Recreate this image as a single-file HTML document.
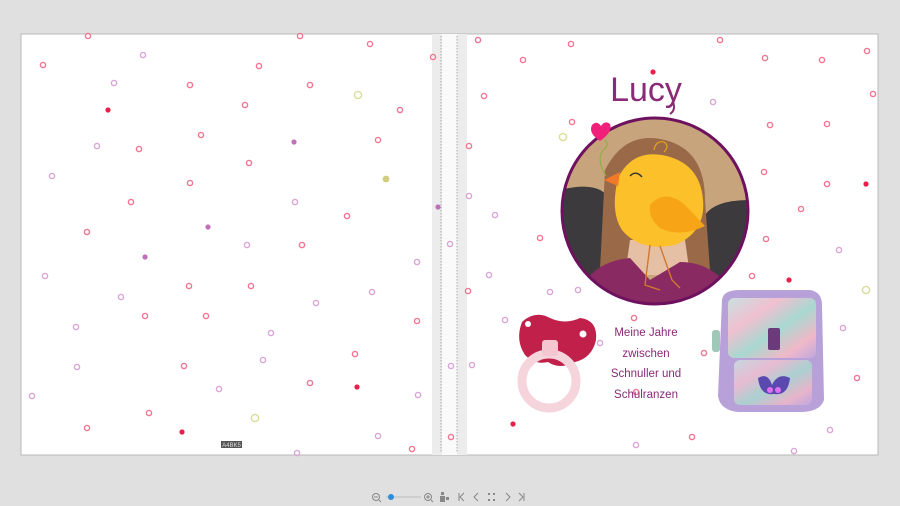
<!DOCTYPE html>
<html><head><meta charset="utf-8"><style>
html,body{margin:0;padding:0;background:#e0e0e0;width:900px;height:506px;overflow:hidden;font-family:"Liberation Sans",sans-serif}
</style></head><body>
<svg width="900" height="506" viewBox="0 0 900 506" xmlns="http://www.w3.org/2000/svg" style="position:absolute;left:0;top:0">
<defs>
<clipPath id="cc"><circle cx="655" cy="211" r="93"/></clipPath>
<linearGradient id="bp" x1="0" y1="0" x2="1" y2="1">
<stop offset="0" stop-color="#c8e0e0"/><stop offset="0.3" stop-color="#f0c0d0"/><stop offset="0.55" stop-color="#a8d8d0"/><stop offset="0.8" stop-color="#f0b8c8"/><stop offset="1" stop-color="#c0a8e0"/>
</linearGradient>
</defs>
<!-- pages -->
<rect x="21" y="34" width="857" height="421" fill="#fff" stroke="#b8b8b8" stroke-width="1"/>
<rect x="432" y="34" width="10" height="421" fill="#ececec"/>
<rect x="457" y="34" width="10" height="421" fill="#ececec"/>
<rect x="442" y="34" width="15" height="421" fill="#fafafa"/>
<line x1="441" y1="36" x2="441" y2="453" stroke="#999" stroke-dasharray="1.5,1.5" stroke-width="0.8"/>
<line x1="457" y1="36" x2="457" y2="453" stroke="#999" stroke-dasharray="1.5,1.5" stroke-width="0.8"/>
<g fill="none" stroke-width="1.4">
<g stroke="#f07894">
<circle cx="88" cy="36" r="2.6"/><circle cx="43" cy="65" r="2.6"/><circle cx="259" cy="66" r="2.6"/><circle cx="300" cy="36" r="2.6"/><circle cx="370" cy="44" r="2.6"/><circle cx="190" cy="85" r="2.6"/><circle cx="310" cy="85" r="2.6"/><circle cx="245" cy="105" r="2.6"/><circle cx="400" cy="110" r="2.6"/><circle cx="201" cy="135" r="2.6"/><circle cx="139" cy="149" r="2.6"/><circle cx="378" cy="140" r="2.6"/><circle cx="249" cy="163" r="2.6"/><circle cx="190" cy="183" r="2.6"/><circle cx="131" cy="202" r="2.6"/><circle cx="347" cy="216" r="2.6"/><circle cx="87" cy="232" r="2.6"/><circle cx="302" cy="245" r="2.6"/><circle cx="189" cy="286" r="2.6"/><circle cx="251" cy="286" r="2.6"/><circle cx="145" cy="316" r="2.6"/><circle cx="206" cy="316" r="2.6"/><circle cx="417" cy="321" r="2.6"/><circle cx="184" cy="366" r="2.6"/><circle cx="355" cy="354" r="2.6"/><circle cx="310" cy="383" r="2.6"/><circle cx="149" cy="413" r="2.6"/><circle cx="87" cy="428" r="2.6"/><circle cx="412" cy="449" r="2.6"/><circle cx="433" cy="57" r="2.6"/><circle cx="451" cy="437" r="2.6"/><circle cx="469" cy="146" r="2.6"/><circle cx="468" cy="291" r="2.6"/>
<circle cx="478" cy="40" r="2.6"/><circle cx="523" cy="60" r="2.6"/><circle cx="571" cy="44" r="2.6"/><circle cx="720" cy="40" r="2.6"/><circle cx="765" cy="58" r="2.6"/><circle cx="822" cy="60" r="2.6"/><circle cx="867" cy="51" r="2.6"/><circle cx="484" cy="96" r="2.6"/><circle cx="572" cy="122" r="2.6"/><circle cx="770" cy="125" r="2.6"/><circle cx="827" cy="124" r="2.6"/><circle cx="873" cy="94" r="2.6"/><circle cx="764" cy="172" r="2.6"/><circle cx="827" cy="184" r="2.6"/><circle cx="801" cy="209" r="2.6"/><circle cx="540" cy="238" r="2.6"/><circle cx="766" cy="239" r="2.6"/><circle cx="752" cy="276" r="2.6"/><circle cx="857" cy="378" r="2.6"/><circle cx="692" cy="437" r="2.6"/><circle cx="636" cy="392" r="2.6"/><circle cx="634" cy="318" r="2.6"/><circle cx="704" cy="353" r="2.6"/>
</g>
<g stroke="#dba6d6">
<circle cx="143" cy="55" r="2.6"/><circle cx="114" cy="83" r="2.6"/><circle cx="97" cy="146" r="2.6"/><circle cx="52" cy="176" r="2.6"/><circle cx="295" cy="202" r="2.6"/><circle cx="247" cy="245" r="2.6"/><circle cx="417" cy="262" r="2.6"/><circle cx="45" cy="276" r="2.6"/><circle cx="372" cy="292" r="2.6"/><circle cx="121" cy="297" r="2.6"/><circle cx="316" cy="303" r="2.6"/><circle cx="76" cy="327" r="2.6"/><circle cx="271" cy="333" r="2.6"/><circle cx="77" cy="367" r="2.6"/><circle cx="263" cy="360" r="2.6"/><circle cx="32" cy="396" r="2.6"/><circle cx="219" cy="389" r="2.6"/><circle cx="418" cy="395" r="2.6"/><circle cx="378" cy="436" r="2.6"/><circle cx="297" cy="453" r="2.6"/><circle cx="450" cy="244" r="2.6"/><circle cx="451" cy="366" r="2.6"/><circle cx="469" cy="196" r="2.6"/><circle cx="472" cy="365" r="2.6"/>
<circle cx="713" cy="102" r="2.6"/><circle cx="495" cy="215" r="2.6"/><circle cx="839" cy="250" r="2.6"/><circle cx="489" cy="275" r="2.6"/><circle cx="578" cy="290" r="2.6"/><circle cx="550" cy="292" r="2.6"/><circle cx="843" cy="328" r="2.6"/><circle cx="505" cy="320" r="2.6"/><circle cx="600" cy="343" r="2.6"/><circle cx="636" cy="445" r="2.6"/><circle cx="830" cy="430" r="2.6"/><circle cx="794" cy="451" r="2.6"/>
</g>
<g stroke="#dcdc9a"><circle cx="358" cy="95" r="3.6"/><circle cx="255" cy="418" r="3.6"/><circle cx="563" cy="137" r="3.6"/><circle cx="866" cy="290" r="3.6"/></g>
</g>
<g fill="#e8204a"><circle cx="108" cy="110" r="2.6"/><circle cx="357" cy="387" r="2.6"/><circle cx="182" cy="432" r="2.6"/><circle cx="653" cy="72" r="2.6"/><circle cx="866" cy="184" r="2.6"/><circle cx="789" cy="280" r="2.6"/><circle cx="513" cy="424" r="2.6"/></g>
<g fill="#c070b8"><circle cx="294" cy="142" r="2.6"/><circle cx="208" cy="227" r="2.6"/><circle cx="145" cy="257" r="2.6"/><circle cx="438" cy="207" r="2.6"/></g>
<circle cx="386" cy="179" r="3.4" fill="#d0cc80"/>
<rect x="221" y="441" width="21" height="7" fill="#555"/>
<text x="231.5" y="447" font-size="6" fill="#ddd" text-anchor="middle">A4BK5</text>

<!-- photo -->
<g clip-path="url(#cc)">
<rect x="560" y="116" width="190" height="190" fill="#c7a47c"/>
<path d="M560 190 Q600 180 610 200 L612 306 L560 306Z" fill="#3c3a3c"/>
<path d="M750 200 Q715 200 705 215 L705 306 L750 306Z" fill="#3c3a3c"/>
<path d="M605 170 Q625 130 665 140 Q705 150 705 200 L710 270 L600 270 Z" fill="#9a6a48"/>
<path d="M630 240 L685 240 L690 275 L625 275Z" fill="#e6c0a4"/>
<path d="M575 306 Q585 262 630 258 L650 280 L680 262 Q720 262 740 306Z" fill="#8a2a62"/>
</g>
<circle cx="655" cy="211" r="93" fill="none" stroke="#6e1260" stroke-width="3"/>
<!-- chick -->
<path d="M618 178 Q632 150 662 155 Q700 162 703 200 Q706 232 675 245 Q640 252 622 230 Q610 212 618 178Z" fill="#fbc02a"/>
<path d="M650 205 Q665 188 685 205 L705 226 Q680 238 660 228 Q648 218 650 205Z" fill="#f7a417"/>
<path d="M620 172 L604 180 L618 186Z" fill="#f07a28"/>
<path d="M630 176 Q636 170 642 177" stroke="#333" stroke-width="1.4" fill="none"/>
<path d="M650 245 L645 285 L660 290 M660 246 L672 280 L680 288" stroke="#d07830" stroke-width="1.4" fill="none"/>
<path d="M654 150 Q656 140 664 142 Q670 146 664 152" stroke="#e8a020" stroke-width="1.2" fill="none"/>
<path d="M606 176 Q596 160 603 150 M603 150 Q610 145 605 140" stroke="#8ab040" stroke-width="1" fill="none"/>
<path d="M600 141 Q588 133 592 125 Q597 120 601 126 Q605 120 610 124 Q613 132 600 141Z" fill="#f0207a"/>
<!-- Lucy -->
<text x="646" y="101" font-size="34" fill="#8a2a78" text-anchor="middle" font-family="'Liberation Sans',sans-serif" font-weight="300">Lucy</text>
<path d="M673 102 Q676 110 670 114" stroke="#8a2a78" stroke-width="2" fill="none"/>
<g font-size="11.5" fill="#8a2a78" text-anchor="middle">
<text x="646" y="336">Meine Jahre</text>
<text x="646" y="357">zwischen</text>
<text x="646" y="377">Schnuller und</text>
<text x="646" y="398">Schulranzen</text>
</g>
<!-- pacifier -->
<path d="M522 322 Q535 310 550 318 Q565 325 580 318 Q598 320 596 340 Q592 358 575 362 Q560 370 548 362 Q535 365 525 355 Q515 340 522 322Z" fill="#c0204a"/>
<circle cx="528" cy="324" r="3" fill="#fff"/><circle cx="583" cy="334" r="3.5" fill="#fff"/>
<circle cx="549" cy="381" r="27" fill="none" stroke="#f6d4dc" stroke-width="9"/>
<rect x="542" y="340" width="16" height="16" rx="3" fill="#f3c6d0"/>
<!-- backpack -->
<path d="M722 300 Q723 290 740 290 L810 290 Q822 292 822 305 L824 400 Q820 412 800 412 L738 412 Q720 410 718 396Z" fill="#b8a0d8"/>
<rect x="728" y="298" width="88" height="60" rx="6" fill="url(#bp)"/>
<rect x="734" y="360" width="78" height="45" rx="6" fill="url(#bp)" opacity="0.85"/>
<rect x="768" y="328" width="12" height="22" rx="2" fill="#6a3a7a"/>
<path d="M758 378 Q768 372 772 385 Q778 372 790 378 Q788 396 774 394 Q760 396 758 378Z" fill="#5a4ab0"/>
<circle cx="770" cy="390" r="3" fill="#e070f0"/><circle cx="778" cy="390" r="3" fill="#e070f0"/>
<rect x="712" y="330" width="8" height="22" rx="3" fill="#a0c8b8"/>
<!-- toolbar -->
<g stroke="#888" fill="none" stroke-width="1">
<circle cx="376" cy="497" r="3.5"/><line x1="374" y1="497" x2="378" y2="497"/><line x1="379" y1="500" x2="381" y2="502"/>
<line x1="386" y1="497" x2="421" y2="497" stroke="#bbb"/>
<circle cx="428" cy="497" r="3.5"/><line x1="426" y1="497" x2="430" y2="497"/><line x1="428" y1="495" x2="428" y2="499"/><line x1="431" y1="500" x2="433" y2="502"/>
<path d="M459 493 L459 501 M464 493 L460 497 L464 501"/>
<path d="M478 493 L474 497 L478 501"/>
<path d="M506 493 L510 497 L506 501"/>
<path d="M524 493 L524 501 M519 493 L523 497 L519 501"/>
</g>
<circle cx="391" cy="497" r="3" fill="#2a8ee0"/>
<g fill="#888"><rect x="441" y="492" width="3" height="3"/><rect x="440" y="496" width="5" height="6"/><rect x="446" y="497" width="3" height="3"/>
<rect x="488" y="493" width="2" height="2"/><rect x="493" y="493" width="2" height="2"/><rect x="488" y="499" width="2" height="2"/><rect x="493" y="499" width="2" height="2"/></g>
</svg>
</body></html>
